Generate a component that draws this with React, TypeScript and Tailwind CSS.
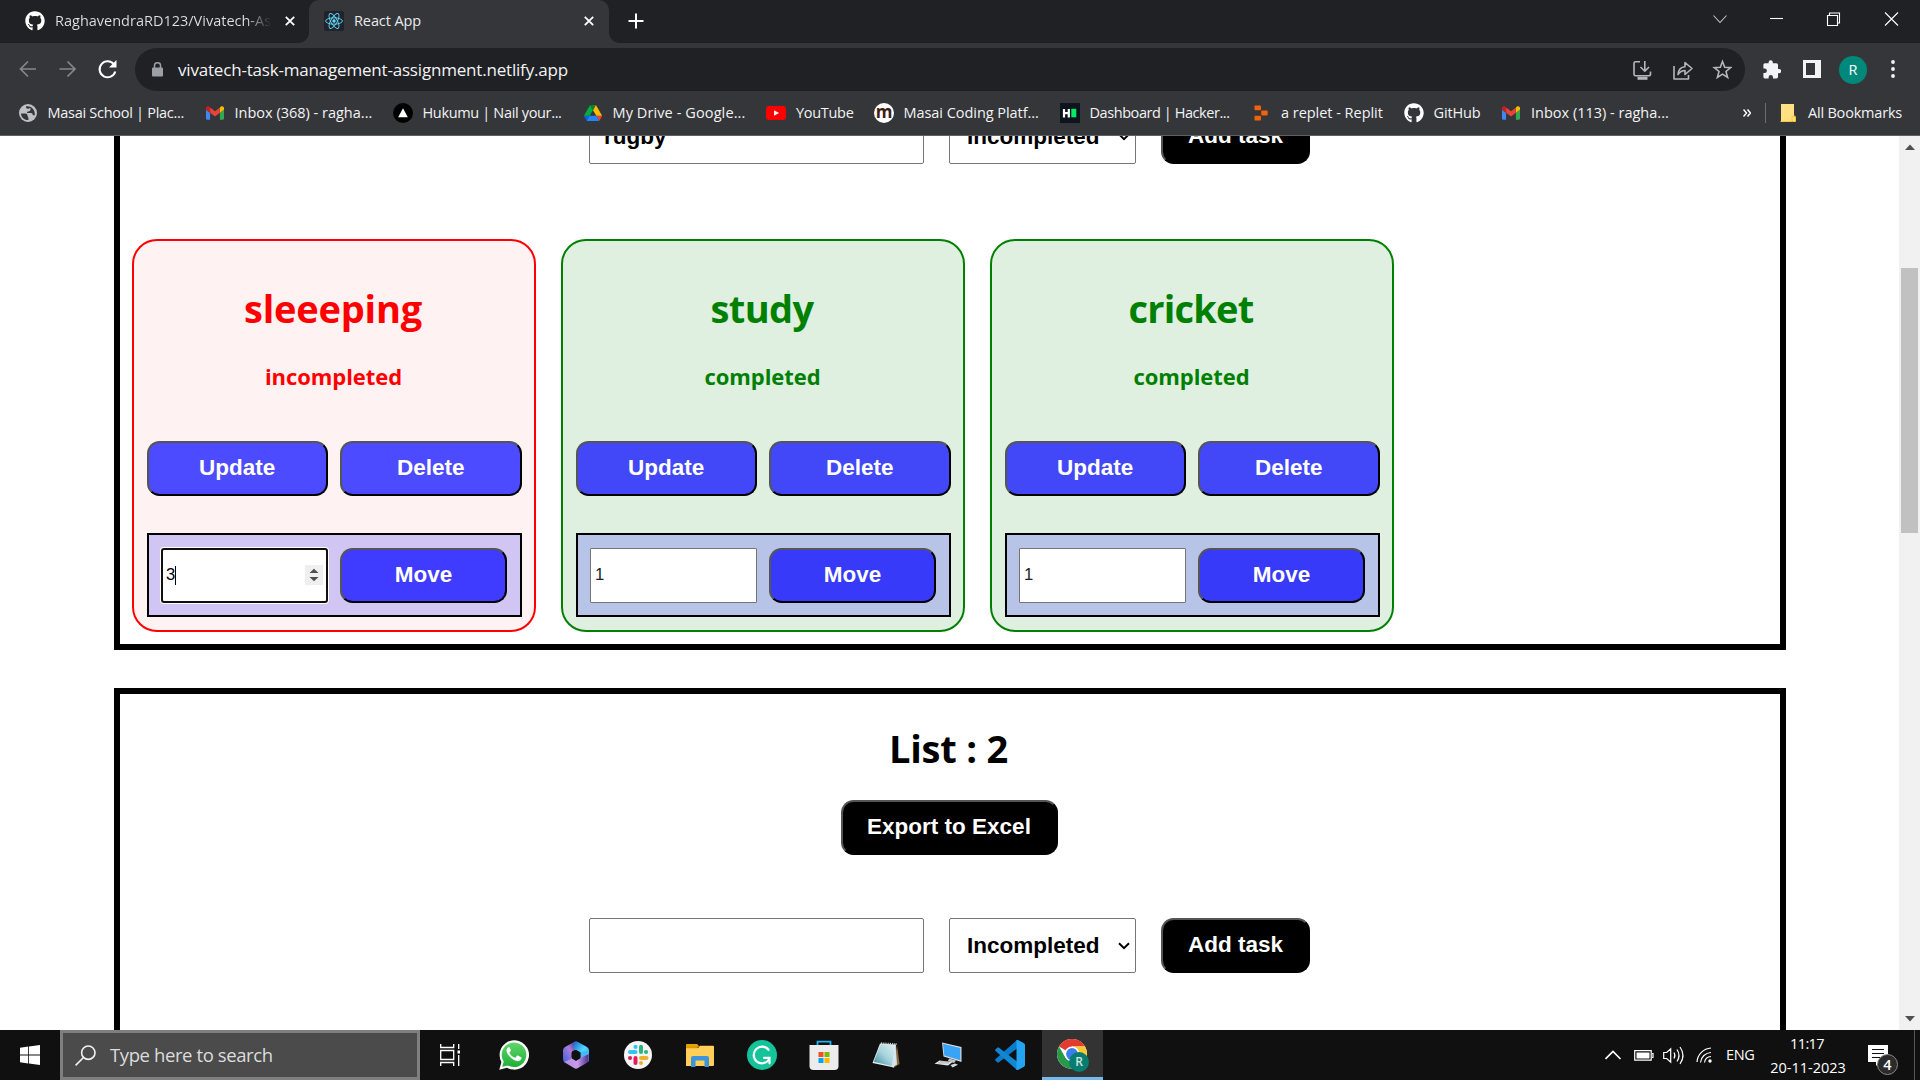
import type { ReactNode } from "react";
import { FaGithub } from "react-icons/fa";
import clsx from "clsx";

const OutsetButton = ({ className, children }: { className: string; children: ReactNode }) => (
  <button
    className={clsx(
      "flex h-[55px] items-center justify-center rounded-[12.5px] border-2 border-black border-t-[#555] border-l-[#555] pb-[1px] font-['Liberation_Sans',sans-serif] text-[22.5px] leading-none font-bold text-white",
      className,
    )}
  >
    {children}
  </button>
);

/* ---------- Browser icons ---------- */

const ReactIcon = () => (
  <svg viewBox="0 0 20 20" className="size-5 rounded-[2px] bg-[#20232a]">
    <g fill="none" stroke="#61dafb" strokeWidth="0.9">
      <ellipse cx="10" cy="10" rx="8.4" ry="3.2" />
      <ellipse cx="10" cy="10" rx="8.4" ry="3.2" transform="rotate(60 10 10)" />
      <ellipse cx="10" cy="10" rx="8.4" ry="3.2" transform="rotate(120 10 10)" />
    </g>
    <circle cx="10" cy="10" r="1.7" fill="#61dafb" />
  </svg>
);

const Cross = () => (
  <svg viewBox="0 0 10 10" className="size-[10px]" stroke="#fff" strokeWidth="1.8" fill="none">
    <path d="M0.8 0.8 9.2 9.2M9.2 0.8 0.8 9.2" />
  </svg>
);

const Globe = () => (
  <svg viewBox="0 0 18 18" className="size-[18px]">
    <circle cx="9" cy="9" r="9" fill="#bdc1c6" />
    <path
      d="M2 9.500h4.200c1.600 0 2.300.8 2.300 2.200 0 1 .9 1 .9 2v2.400C5.400 16.400 2.300 13.500 2 9.500ZM7 2.300c-.2 1.800.6 2.500 2 2.500 1 0 1.300-.8 2.400-.8v1.800c0 1.400-1 1.600-2.300 1.600-1.400 0-1.500 1.700-.2 1.700h3.200c1.300 0 1.700 1 1.700 2.200h2c.5-4.600-2.600-9.800-8.800-9Z"
      fill="#35363a"
    />
  </svg>
);

const Gmail = () => (
  <svg viewBox="52 42 88 66" className="h-[14px] w-[18px]">
    <path fill="#4285f4" d="M58 108h14V74L52 59v43c0 3.320 2.690 6 6 6" />
    <path fill="#34a853" d="M120 108h14c3.320 0 6-2.690 6-6V59l-20 15" />
    <path fill="#fbbc04" d="M120 48v26l20-15v-8c0-7.420-8.470-11.650-14.400-7.200" />
    <path fill="#ea4335" d="M72 74V48l24 18 24-18v26L96 92" />
    <path fill="#c5221f" d="M52 51v8l20 15V48l-5.600-4.200c-5.940-4.450-14.400-.22-14.400 7.200" />
  </svg>
);

const Hukumu = () => (
  <svg viewBox="0 0 20 20" className="size-5">
    <circle cx="10" cy="10" r="10" fill="#000" />
    <path d="M10 5.300 14.800 14.300H5.200Z" fill="#fff" />
  </svg>
);

const Drive = () => (
  <svg viewBox="0 0 87.300 78" className="h-4 w-[18px]">
    <path d="m6.600 66.850 3.850 6.650c.8 1.400 1.950 2.500 3.300 3.300l13.750-23.800h-27.500c0 1.550.4 3.100 1.200 4.500z" fill="#0066da" />
    <path d="m43.650 25-13.750-23.800c-1.350.8-2.500 1.900-3.300 3.300l-25.400 44a9.060 9.060 0 0 0-1.200 4.500h27.500z" fill="#00ac47" />
    <path d="m73.550 76.800c1.350-.8 2.500-1.900 3.300-3.300l1.600-2.750 7.650-13.250c.8-1.400 1.200-2.950 1.200-4.500h-27.500l5.850 11.500z" fill="#ea4335" />
    <path d="m43.650 25 13.750-23.800c-1.350-.8-2.900-1.200-4.500-1.200h-18.500c-1.600 0-3.150.45-4.500 1.200z" fill="#00832d" />
    <path d="m59.800 53h-32.300l-13.750 23.800c1.350.8 2.900 1.200 4.500 1.200h50.800c1.600 0 3.150-.45 4.500-1.200z" fill="#2684fc" />
    <path d="m73.400 26.500-12.700-22c-.8-1.400-1.950-2.500-3.300-3.300l-13.750 23.800 16.150 28h27.450c0-1.550-.4-3.100-1.200-4.500z" fill="#ffba00" />
  </svg>
);

const YouTube = () => (
  <svg viewBox="0 0 20 14" className="h-[14px] w-5">
    <rect width="20" height="14" rx="3" fill="#f00" />
    <path d="M8 4.200 13 7 8 9.800Z" fill="#fff" />
  </svg>
);

const Masai = () => (
  <span className="flex size-5 items-center justify-center rounded-full bg-white pb-[3px] font-['Open_Sans',sans-serif] text-[17px] leading-none font-bold text-[#3d1c14]">
    m
  </span>
);

const HackerRank = () => (
  <svg viewBox="0 0 20 20" className="size-5">
    <rect width="20" height="20" fill="#0e141e" />
    <path d="M4 6v8.500M8.800 6v8.500M4 10.200h5" stroke="#fff" strokeWidth="2.200" fill="none" />
    <rect x="11.300" y="5.800" width="5" height="8.500" fill="#00ea64" />
  </svg>
);

const Replit = () => (
  <svg viewBox="0 0 14 16" className="h-4 w-[14px]" fill="#f26207">
    <rect x="0.500" y="0.500" width="6.500" height="4.800" rx="0.800" />
    <rect x="7.200" y="5.600" width="6.500" height="4.800" rx="0.800" />
    <rect x="0.500" y="10.700" width="6.500" height="4.800" rx="0.800" />
  </svg>
);

/* ---------- Browser chrome ---------- */

const TabStrip = () => (
  <div className="flex h-[43px] bg-[#202124] text-[14.5px] text-[#e8eaed]">
    <div className="flex w-[309px] items-center pb-[1px] pl-[25px]">
      <FaGithub className="size-5 shrink-0 text-white" />
      <span className="ml-[10px] w-[217px] overflow-hidden bg-gradient-to-r from-[#dfe1e5] from-88% to-[#202124] bg-clip-text whitespace-nowrap text-transparent">
        RaghavendraRD123/Vivatech-As
      </span>
      <span className="ml-[13px]"><Cross /></span>
    </div>
    <div className="relative flex w-[300px] items-center rounded-t-[10px] bg-[#35363a] pb-[1px] pl-[15px]">
      <span className="absolute bottom-0 -left-[10px] size-[10px] bg-[radial-gradient(circle_at_0_0,#202124_9.5px,#35363a_10px)]" />
      <span className="absolute -right-[10px] bottom-0 size-[10px] bg-[radial-gradient(circle_at_100%_0,#202124_9.5px,#35363a_10px)]" />
      <ReactIcon />
      <span className="ml-[10px] w-[230px] tracking-[-0.1px]">React App</span>
      <Cross />
    </div>
    <svg viewBox="0 0 16 16" className="mt-[13px] ml-[19px] size-4" stroke="#fff" strokeWidth="2">
      <path d="M8 0.500v15M0.500 8h15" />
    </svg>
    <svg viewBox="0 0 186 14" className="mt-3 mr-[21px] ml-auto h-[14px] w-[186px]" fill="none" stroke="#fff" strokeWidth="1.100">
      <path d="M0.500 3.500 7 10.500 13.500 3.500" stroke="#c4c7cb" />
      <path d="M57 6.500h13" />
      <path d="M114.500 3.500h10v10h-10zM116.500 3V1h10v10h-2" />
      <path d="M172 0.500 185 13.500M185 0.500 172 13.500" />
    </svg>
  </div>
);

const AddressBar = () => (
  <div className="flex h-[53px] items-center bg-[#35363a]">
    <svg viewBox="0 0 100 22" className="ml-[18px] h-[22px] w-[100px]" fill="none" strokeWidth="1.700">
      <path d="M18 10H2.500M10 2.500 2.500 10 10 17.500" stroke="#85878a" />
      <path d="M41.500 10H57M49.500 2.500 57 10 49.500 17.500" stroke="#85878a" />
      <path d="M96 5.500A8 8 0 1 0 97.300 12.500" stroke="#fff" strokeWidth="2" />
      <path d="M98.500 1v7.500h-7.500z" fill="#fff" />
    </svg>
    <div className="ml-[17px] flex h-[43px] w-[1610px] items-center rounded-full bg-[#202124] pl-[17px]">
      <svg viewBox="0 0 11 15" className="h-[15px] w-[11px]">
        <rect y="5.500" width="11" height="9" rx="1" fill="#9aa0a6" />
        <path d="M2.500 6V3.500a3 2.700 0 0 1 6 0V6" stroke="#9aa0a6" strokeWidth="1.500" fill="none" />
      </svg>
      <span className="ml-[15px] text-[17px] tracking-[-0.19px] text-[#f1f3f4]">
        vivatech-task-management-assignment.netlify.app
      </span>
      <svg viewBox="0 0 100 22" className="mr-[13px] ml-auto h-[22px] w-[100px]" fill="none" stroke="#b4b7bb" strokeWidth="1.600">
        <path d="M8 2.800H3.500Q2 2.800 2 4.300v11Q2 16.800 3.500 16.800h13Q18.500 16.800 18.500 15.300V12.500M12.800 2v9.500M8.500 8l4.300 4.200L17 8" />
        <path d="M5.500 19.300h10" strokeWidth="3" />
        <path d="M42 7v13h14.500v-4M46 15.500c.5-5 3-7.500 7-7.700V3.500l7 6-7 6v-4c-3 0-5 1.200-7 4Z" strokeLinejoin="round" />
        <path d="m90.500 2.500 2.200 5.800 6 .3-4.700 3.900 1.600 6-5.100-3.400-5.100 3.400 1.600-6-4.700-3.900 6-.3Z" />
      </svg>
    </div>
    <svg viewBox="0 0 18 19" className="ml-[18px] h-[19px] w-[18px]" fill="#f1f3f4">
      <path d="M16 9h-1V5c0-1-.7-1.700-1.700-1.700H9.800V2.300a2.100 2.100 0 0 0-4.200 0v1H2C1 3.300.4 4 .4 5v3.500h1.200a2.300 2.300 0 0 1 0 4.600H.4v3.700c0 1 .6 1.700 1.600 1.700h3.600v-1.200a2.200 2.200 0 0 1 4.400 0v1.200h3.300c1 0 1.700-.7 1.700-1.700v-3.600h1A2.100 2.100 0 0 0 16 9Z" />
    </svg>
    <span className="mb-[2px] ml-[22px] h-[18px] w-[18px] border-[3px] border-r-[6px] border-[#f1f3f4]" />
    <span className="ml-[18px] flex size-7 items-center justify-center rounded-full bg-[#00897b] text-[14.5px] text-white">R</span>
    <svg viewBox="0 0 4 20" className="mb-[2px] ml-[23.500px] h-5 w-1" fill="#f1f3f4">
      <circle cx="2" cy="3" r="1.900" />
      <circle cx="2" cy="10" r="1.900" />
      <circle cx="2" cy="17" r="1.900" />
    </svg>
  </div>
);

type Bookmark = { icon: ReactNode; label: string; box: string; text: string };

const bookmarks: Bookmark[] = [
  { icon: <Globe />, label: "Masai School | Plac...", box: "w-[187px]", text: "ml-[10.5px] tracking-[-0.28px]" },
  { icon: <Gmail />, label: "Inbox (368) - ragha...", box: "w-[187px]", text: "ml-[10.5px]" },
  { icon: <Hukumu />, label: "Hukumu | Nail your...", box: "w-[191px]", text: "ml-[9.5px] tracking-[-0.34px]" },
  { icon: <Drive />, label: "My Drive - Google...", box: "w-[182px]", text: "ml-[10.5px] tracking-[0.1px]" },
  { icon: <YouTube />, label: "YouTube", box: "w-[108px]", text: "ml-[10px] tracking-[-0.3px]" },
  { icon: <Masai />, label: "Masai Coding Platf...", box: "w-[186px]", text: "ml-[9.5px] tracking-[-0.05px]" },
  { icon: <HackerRank />, label: "Dashboard | Hacker...", box: "w-[194px]", text: "ml-[9.5px] tracking-[-0.43px]" },
  { icon: <Replit />, label: "a replet - Replit", box: "w-[150px]", text: "ml-[13px] tracking-[-0.03px]" },
  { icon: <FaGithub className="size-5 text-white" />, label: "GitHub", box: "w-[98px]", text: "ml-[9.5px] tracking-[-0.13px]" },
  { icon: <Gmail />, label: "Inbox (113) - ragha...", box: "w-[241px]", text: "ml-[11px]" },
];

const BookmarksBar = () => (
  <div className="flex h-10 items-center border-b border-[#606165] bg-[#35363a] pb-[6px] pl-[19px] text-[14.5px] whitespace-nowrap text-[#f1f3f4]">
    {bookmarks.map((b) => (
      <div key={b.label} className={clsx("flex shrink-0 items-center", b.box)}>
        {b.icon}
        <span className={b.text}>{b.label}</span>
      </div>
    ))}
    <svg viewBox="0 0 8 8" className="h-2 w-2" fill="none" stroke="#fff" strokeWidth="1.500">
      <path d="M0.500 0.500 3.500 4 0.500 7.500M4.500 0.500 7.500 4 4.500 7.500" />
    </svg>
    <span className="ml-[14px] h-5 w-px bg-[#6b6c70]" />
    <svg viewBox="0 0 16 18" className="ml-[14px] h-[18px] w-4">
      <path d="M1 0h13v12l1.500 1V17.500H1Z" fill="#ffe082" />
      <path d="M0.500 17.500h11.500v-4.500q0-1 1-1h1.500q1 0 1 1v4.500h-3" stroke="#f5c730" fill="none" />
    </svg>
    <span className="ml-[12px] tracking-[-0.2px]">All Bookmarks</span>
  </div>
);

/* ---------- Page content ---------- */

const TaskForm = ({ value }: { value?: string }) => (
  <div className="flex gap-[25px] pl-[469px] font-['Liberation_Sans',sans-serif] text-[22.5px] leading-none font-bold text-black">
    <div className="flex h-[55px] w-[335px] items-center rounded-[2px] border border-[#767676] bg-white pt-[1px] pl-[14px]">{value}</div>
    <div className="flex h-[55px] w-[187px] items-center rounded-[2px] border border-[#767676] bg-white pt-[1px] pl-[17px]">
      Incompleted
      <svg viewBox="0 0 12 8" className="ml-[18px] h-2 w-3" fill="none" stroke="#000" strokeWidth="2">
        <path d="M1 1.200 6 6.200 11 1.200" />
      </svg>
    </div>
    <OutsetButton className="w-[149px] bg-black">Add task</OutsetButton>
  </div>
);

type Task = { title: string; titleTracking: string; done: boolean; order: string; focused?: boolean };

const tasks: Task[] = [
  { title: "sleeeping", titleTracking: "tracking-[-0.2px]", done: false, order: "3", focused: true },
  { title: "study", titleTracking: "tracking-[-0.6px]", done: true, order: "1" },
  { title: "cricket", titleTracking: "tracking-[-0.8px]", done: true, order: "1" },
];

const Spinner = () => (
  <svg viewBox="0 0 18 20" className="mr-[3px] mb-[1px] ml-auto h-5 w-[18px]">
    <rect width="18" height="20" fill="#efefef" />
    <path d="M4.500 8 9 3.800 13.500 8ZM4.500 12 9 16.200 13.500 12Z" fill="#4f4f4f" />
  </svg>
);

const TaskCard = ({ task }: { task: Task }) => (
  <div
    className={clsx(
      "flex h-[393px] w-[404px] flex-col rounded-[25px] border-2 px-[12.5px] pt-[41px]",
      task.done ? "border-[#008000] bg-[#dfefe0] text-[#008000]" : "border-[#ff0000] bg-[#fff2f2] text-[#ff0000]",
    )}
  >
    <h1 className={clsx("mr-[2px] h-[53px] text-center text-[38px] leading-[53px] font-bold", task.titleTracking)}>{task.title}</h1>
    <h3 className="mt-[26px] mr-[1px] h-[30px] text-center text-[22px] leading-[30px] font-bold tracking-[-0.07px]">
      {task.done ? "completed" : "incompleted"}
    </h3>
    <div className="mt-[50px] grid grid-cols-2 gap-[12.5px]">
      <OutsetButton className={task.done ? "bg-[#4248f8]" : "bg-[#4c4bff]"}>Update</OutsetButton>
      <OutsetButton className={task.done ? "bg-[#4248f8]" : "bg-[#4c4bff]"}>Delete</OutsetButton>
    </div>
    <div
      className={clsx(
        "mt-[37px] grid h-[84px] grid-cols-2 gap-[12.5px] border-2 border-black px-[12.5px] pt-[13px]",
        task.done ? "bg-[#b7c3e7]" : "bg-[#d1c5f3]",
      )}
    >
      <div
        className={clsx(
          "flex h-[55px] items-center bg-white font-['Liberation_Sans',sans-serif] text-[16.67px] leading-none",
          task.focused
            ? "rounded-[3px] border-2 border-[#101010] pl-[3px] text-black shadow-[0_0_0_1px_#fff]"
            : "rounded-[1px] border border-[#767676] pl-1 text-[#222]",
        )}
      >
        <span>{task.order}</span>
        {task.focused && <span className="mb-[1px] h-[19px] w-px bg-black" />}
        {task.focused && <Spinner />}
      </div>
      <OutsetButton className={task.done ? "bg-[#373af8]" : "bg-[#3f3bff]"}>Move</OutsetButton>
    </div>
  </div>
);

const Page = () => (
  <div className="flex h-[894px] overflow-hidden bg-white">
    <main className="w-[1899px] pl-[114px]">
      <section className="h-[514px] w-[1672px] overflow-hidden border-x-[6px] border-b-[6px] border-black">
        <div className="-mt-[27px]">
          <TaskForm value="rugby" />
        </div>
        <div className="mt-[75px] flex gap-[25px] pl-3">
          {tasks.map((t) => (
            <TaskCard key={t.title} task={t} />
          ))}
        </div>
      </section>
      <section className="mt-[38px] flex h-[400px] w-[1672px] flex-col border-[6px] border-black">
        <h1 className="mt-[28px] mr-[3px] h-[53px] text-center text-[38px] leading-[53px] font-bold tracking-[-0.2px] text-black">List : 2</h1>
        <OutsetButton className="mt-[25px] mr-[2px] w-[217px] self-center bg-black">Export to Excel</OutsetButton>
        <div className="mt-[63px]">
          <TaskForm />
        </div>
      </section>
    </main>
    <div className="flex w-[21px] flex-col items-center bg-[#f1f1f1]">
      <svg viewBox="0 0 10 6" className="mt-[8px] h-[6px] w-[10px]" fill="#505050"><path d="M0 6 5 0.500 10 6Z" /></svg>
      <span className="mt-[118px] h-[265px] w-[17px] bg-[#c1c1c1]" />
      <svg viewBox="0 0 10 6" className="mt-auto mb-[8px] h-[6px] w-[10px]" fill="#505050"><path d="M0 0 5 5.500 10 0Z" /></svg>
    </div>
  </div>
);

/* ---------- Taskbar ---------- */

const TaskView = () => (
  <svg viewBox="0 0 20 24" className="h-6 w-5" fill="none" stroke="#fff" strokeWidth="1.300">
    <path d="M0.700 1v3.500h13V1M0.700 7.500h13v9h-13zM0.700 23v-3.500h13V23M18.700 1v5M18.700 12v11" />
    <path d="M17.500 7.500h2.500v3h-2.500z" fill="#fff" stroke="none" />
  </svg>
);

const WhatsApp = () => (
  <svg viewBox="0 0 30 30" className="size-[30px]">
    <defs>
      <linearGradient id="wa" x2="0" y2="1"><stop stopColor="#60d669" /><stop offset="1" stopColor="#1faf38" /></linearGradient>
    </defs>
    <path d="M0.300 29.700 2.400 22A14.700 14.700 0 1 1 8 27.700Z" fill="#fff" />
    <path d="M3.200 26.800 4.700 21.500A12.300 12.300 0 1 1 8.800 25.400Z" fill="url(#wa)" />
    <path d="M11 8c-.4-.8-.7-.8-1.200-.8-.9 0-2.300 1.200-2.300 3.300 0 1.800 1.500 4.300 3.600 6.600 2.600 2.800 5.500 4.100 7.400 4.100 2.200 0 3.700-1.400 3.900-2.700.1-.6.1-1.100-.2-1.300l-3.300-1.600c-.4-.2-.8-.1-1.100.3l-1.200 1.500c-.3.400-.6.300-1 .1-2.300-1-4-2.600-5.100-4.600-.2-.4 0-.6.300-.9l.9-1.100c.2-.3.200-.6.100-.9Z" fill="#fff" />
  </svg>
);

const Microsoft365 = () => (
  <svg viewBox="0 0 26 28" className="h-7 w-[26px]">
    <defs>
      <linearGradient id="ma" x1="1" y1="0" x2="0" y2="1"><stop stopColor="#33217c" /><stop offset=".45" stopColor="#a87fd8" /><stop offset="1" stopColor="#3f5be0" /></linearGradient>
      <linearGradient id="mb" x1="0" y1="0" x2="1" y2="0"><stop stopColor="#b48be0" /><stop offset=".55" stopColor="#c79aec" /><stop offset="1" stopColor="#4a2f8c" /></linearGradient>
      <linearGradient id="mc" x1="0" y1="0" x2="1" y2="1"><stop stopColor="#1d5fc8" /><stop offset=".5" stopColor="#4fd8ff" /><stop offset="1" stopColor="#3f8ee8" /></linearGradient>
    </defs>
    <path d="M12 .5 2 6Q0 7.300 0 9.500v9Q0 20.500 2 21.800L9 18.500V10.500L14 8V0Z" fill="url(#ma)" />
    <path d="M10.500 1.200Q13-.3 15 1l9 5Q26 7.300 26 9.500V19q0 2-2.500 2.500L17.500 17.500V11.500L10.500 8Z" fill="url(#mc)" />
    <path d="M1 21 9 17.500l4 2.500L25.500 12v6.500q0 2-1.500 3.300L15 27q-2 1.300-4 0Z" fill="url(#mb)" />
    <path d="M25.900 9.500V13L17.500 17V11Z" fill="#45b8f5" />
    <path d="m13 9 4.500 2.500v5L13 19l-4.500-2.500v-5Z" fill="#101010" />
  </svg>
);

const Slack = () => (
  <svg viewBox="0 0 28 28" className="size-7">
    <circle cx="14" cy="14" r="14" fill="#f6f6f6" />
    <g strokeWidth="4" strokeLinecap="round">
      <path d="M6 11h5.500" stroke="#36c5f0" /><path d="M11.500 5.800v.1" stroke="#36c5f0" />
      <path d="M17 5.800V11" stroke="#2eb67d" /><path d="M22 11h.1" stroke="#2eb67d" />
      <path d="M17 17h5.500" stroke="#ecb22e" /><path d="M17 22v.1" stroke="#ecb22e" />
      <path d="M11.500 17v5" stroke="#e01e5a" /><path d="M6 17h.1" stroke="#e01e5a" />
    </g>
  </svg>
);

const Explorer = () => (
  <svg viewBox="0 0 28 23" className="h-[23px] w-7">
    <path d="M0 1Q0 0 1 0h10l2.500 2.500H0Z" fill="#e8a200" />
    <path d="M0 4h12l2-2.200h13q1 0 1 1V21q0 1-1 1H0Z" fill="#ffcf57" />
    <path d="M0 2h13l-2 2.300H0Z" fill="#e09a00" />
    <path d="M5 23v-9q0-2 2-2h14q2 0 2 2v9h-4.500v-6.500h-9V23Z" fill="#3c94dc" />
  </svg>
);

const Grammarly = () => (
  <svg viewBox="0 0 30 30" className="size-[30px]">
    <circle cx="15" cy="15" r="15" fill="#15c39a" />
    <path d="M21.500 9.800A8.300 8.300 0 1 0 21.800 19.800" stroke="#fff" strokeWidth="2.200" fill="none" strokeLinecap="round" />
    <path d="M17 17.800h5.500v5.500" stroke="#fff" strokeWidth="2.200" fill="none" strokeLinecap="round" />
  </svg>
);

const Store = () => (
  <svg viewBox="0 0 30 30" className="size-[30px]">
    <path d="M8.500 6V1.700h13V6" stroke="#1fb0f0" strokeWidth="1.800" fill="none" />
    <path d="M0.500 5h29v21q0 4-4 4h-21q-4 0-4-4Z" fill="#ececec" />
    <path d="M9.500 12h5v5h-5z" fill="#f25022" /><path d="M15.500 12h5v5h-5z" fill="#7fba00" />
    <path d="M9.500 18h5v5h-5z" fill="#00a4ef" /><path d="M15.500 18h5v5h-5z" fill="#ffb900" />
  </svg>
);

const Notepad = () => (
  <svg viewBox="0 0 28 28" className="size-7">
    <defs>
      <linearGradient id="np" x1="0" y1="1" x2="1" y2="0"><stop stopColor="#3f8a9c" /><stop offset=".5" stopColor="#a5d3dd" /><stop offset="1" stopColor="#dfeef0" /></linearGradient>
    </defs>
    <path d="M25 4 27.500 23 21 27Z" fill="#8a6a3c" />
    <path d="M8 2.500 24 3.500 22 26.500 0.500 22Z" fill="#e3eef0" />
    <path d="M8.500 3.500 23 4.500 20 25 1.800 20.800Z" fill="url(#np)" />
    <path d="m23.500 3.500 1.500 20-5 3Z" fill="#d5e4e6" />
    <path d="m9 2.200 16 1" stroke="#c9c9c9" strokeWidth="1.800" strokeDasharray="1.200 1" />
  </svg>
);

const RemoteDesktop = () => (
  <svg viewBox="0 0 28 28" className="size-7">
    <path d="M8 1.500 27.500 6V21L9.500 15.500Z" fill="#d8dcdf" />
    <path d="M9 2.800 26.300 7v12.300L10.300 14.500Z" fill="#39a3f5" />
    <path d="m15 17.500 7 2-2 2.500-6-2Z" fill="#bfc4c7" />
    <path d="M5.500 19.500 18.500 21 14 24.500.5 22.700Z" fill="#e4e6e8" />
    <path d="M4 22h11M6 20.700h10" stroke="#8f959a" strokeWidth=".6" />
    <path d="m16.500 24 4.500-1.500 3 1.200-5.500 2.800Z" fill="#d7dadc" />
  </svg>
);

const VSCode = () => (
  <svg viewBox="0 0 30 30" className="size-[30px]">
    <path d="M22 0v8.500L4 22.300q-1 .7-1.700 0l-1.700-1.500q-1-1 0-1.900Z" fill="#0a7bcb" />
    <path d="M22 30v-8.500L4 7.700q-1-.7-1.700 0L.6 9.200q-1 1 0 1.900Z" fill="#1187d4" />
    <path d="M21.500 0h1.500l6 3.300q1 .6 1 1.700v20q0 1.100-1 1.700L23 30h-1.500Z" fill="#24a3f0" />
  </svg>
);

const Chrome = () => (
  <svg viewBox="0 0 32 32" className="size-8">
    <circle cx="15" cy="15" r="15" fill="#fff" />
    <path d="M15 15 2 7.500A15 15 0 0 1 28 7.500H15Z" fill="#e33b2e" />
    <path d="M2 7.500A15 15 0 0 0 14.500 30L21.500 18.700 8.500 18.700Z" fill="#28994a" />
    <path d="M28 7.500H15L21.500 18.700 14.500 30A15 15 0 0 0 28 7.500Z" fill="#fcc934" />
    <circle cx="15" cy="15" r="7.500" fill="#fff" />
    <circle cx="15" cy="15" r="5.900" fill="#3b7ded" />
  </svg>
);

const apps = [WhatsApp, Microsoft365, Slack, Explorer, Grammarly, Store, Notepad, RemoteDesktop, VSCode];

const Taskbar = () => (
  <div className="flex h-[50px] bg-[#101010] text-[14.5px] text-white">
    <div className="flex w-[60px] items-center justify-center">
      <svg viewBox="0 0 20 20" className="size-5" fill="#fff">
        <path d="M0 2.700 8.200 1.500V9.500H0ZM9 1.400 20 0V9.500H9ZM0 10.400H8.200V18.500L0 17.300ZM9 10.400H20V20L9 18.600Z" />
      </svg>
    </div>
    <div className="flex w-[360px] items-center border-[3px] border-[#7f7f7f] bg-[#4b4b4b] pl-3">
      <svg viewBox="0 0 21 21" className="size-[21px]" fill="none" stroke="#f1f1f1" strokeWidth="1.600">
        <circle cx="13.300" cy="7.700" r="6.700" />
        <path d="M8.500 12.500 0.600 20.400" />
      </svg>
      <span className="ml-[14px] text-[18.5px] tracking-[-0.4px] text-[#dcdcdc]">Type here to search</span>
    </div>
    <div className="flex w-[63px] items-center justify-center pr-[3px]"><TaskView /></div>
    {apps.map((Icon, i) => (
      <div key={i} className="flex w-[62px] shrink-0 items-center justify-center"><Icon /></div>
    ))}
    <div className="relative ml-[1px] flex w-[61px] items-center justify-center border-b-[3px] border-[#76b9ed] bg-[#333] pt-[3px]">
      <Chrome />
      <span className="absolute top-[22px] left-[27px] flex size-5 items-center justify-center rounded-full bg-[#067d70] text-[12px] leading-none font-semibold text-white/80">R</span>
    </div>
    <svg viewBox="0 0 110 22" className="mt-[14px] ml-auto h-[22px] w-[110px]" fill="none" stroke="#fff" strokeWidth="1.200">
      <path d="M0.500 15 8 7.500 15.500 15" strokeWidth="1.600" />
      <path d="M29.700 6.700h16.500v9.500H29.700zM47 9.500h1v4h-1" />
      <path d="M31.500 8.500h13v6h-13z" fill="#fff" stroke="none" />
      <path d="M58.700 8.500h3l4-3.700v13.400l-4-3.700h-3ZM69 8.500q1.800 3 0 6M72 5.500q4 6 0 12M75 3q6 8.500 0 17" />
      <path d="M92 18A15 15 0 0 1 106 4M95.500 18.500A11 11 0 0 1 106 8.500M99.500 18.500A7 7 0 0 1 106 12.500" />
      <circle cx="105" cy="17" r="1.700" fill="#fff" stroke="none" />
    </svg>
    <span className="ml-[11px] w-7 self-center tracking-[-0.4px]">ENG</span>
    <div className="ml-[16px] flex w-[76px] flex-col items-center pt-[2px] leading-6">
      <span className="mr-[2px] tracking-[-0.6px]">11:17</span>
      <span>20-11-2023</span>
    </div>
    <div className="relative mr-[5px] ml-[22px] w-[47px] border-r border-[#555]">
      <svg viewBox="0 0 20 21" className="mt-[15px] h-[21px] w-5">
        <path d="M0 0h20v17H12l-4 4v-4H0Z" fill="#fff" />
        <path d="M4 4.500h12M4 8.500h12M4 12.500h8" stroke="#101010" />
      </svg>
      <span className="absolute top-[24px] left-[9px] flex size-[21px] items-center justify-center rounded-full border border-[#8a8a8a] bg-[#2b2b2b] font-semibold">4</span>
    </div>
  </div>
);

export default function App() {
  return (
    <div className="h-[1080px] w-[1920px] overflow-hidden bg-white font-['Open_Sans',sans-serif]">
      <TabStrip />
      <AddressBar />
      <BookmarksBar />
      <Page />
      <Taskbar />
    </div>
  );
}
